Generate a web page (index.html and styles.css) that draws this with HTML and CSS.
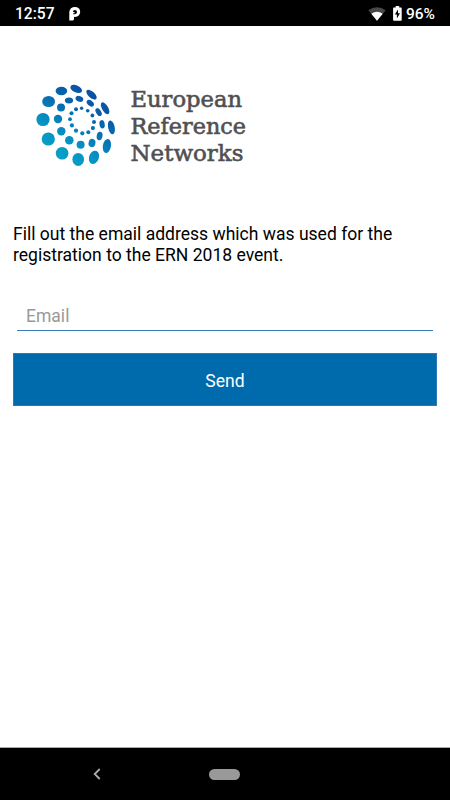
FILE: index.html
```html
<!DOCTYPE html>
<html lang="en">
<head>
<meta charset="utf-8">
<title>European Reference Networks</title>
<link rel="stylesheet" href="styles.css">
</head>
<body>
<header class="status">
  <span class="clock">12:57</span>
  <svg class="parking" width="12" height="14" viewBox="0 0 12 14"><path fill="#fff" fill-rule="evenodd" d="M2 1.2Q4-.1 6.5.1Q11.3.7 11.2 5.1Q10.8 9.6 6 9.9L5 9.8V12.3Q4.8 13.5 3.4 13.5H.3V5.2Q.4 2.5 2 1.2M4.2 7.3H6Q8.2 6.8 8 4.8Q7.6 3 5.8 3.1Q4 3.3 3.9 5.1H5.5V6.2H4.2Z"/></svg>
  <svg class="wifi" width="18" height="14" viewBox="0 0 18 14"><path fill="#484848" d="M.3 3.3Q9-3 17.7 3.3L9 13.8Z"/><path fill="#fff" d="M3.3 6.7Q9 2.8 14.7 6.7L9 13.8Z"/></svg>
  <svg class="battery" width="9" height="15" viewBox="0 0 9 15"><path fill="#fff" d="M2.7 0H6.2V1.4H8Q8.7 1.4 8.7 2.2V14Q8.7 14.8 8 14.8H.8Q.1 14.8.1 14V2.2Q.1 1.4.8 1.4H2.7Z"/><path fill="#000" d="M5 3.6 1.8 8.6H3.9V12.5L7 7.3H5Z"/></svg>
  <span class="percent">96%</span>
</header>
<main class="content">
  <svg class="logo" width="220" height="90" viewBox="33 80 220 90" role="img" aria-label="European Reference Networks">
    <defs><linearGradient id="tone" gradientUnits="userSpaceOnUse" x1="103" y1="94" x2="60" y2="158"><stop offset="0" stop-color="#0b4ba0"/><stop offset=".4" stop-color="#076bb0"/><stop offset=".75" stop-color="#0693c3"/><stop offset="1" stop-color="#05a0c8"/></linearGradient></defs>
    <g fill="url(#tone)">
      <ellipse cx="61.4" cy="91" rx="5.8" ry="4.2"/>
      <ellipse cx="48.6" cy="101.5" rx="6.4" ry="5.6"/>
      <circle cx="43" cy="119.5" r="6.6"/>
      <circle cx="48.3" cy="139" r="6.6"/>
      <circle cx="62.1" cy="153.2" r="6.3"/>
      <ellipse cx="78.2" cy="159.4" rx="5.8" ry="6.5"/>
      <ellipse cx="94" cy="157.3" rx="4.9" ry="6.8" transform="rotate(20 94 157.3)"/>
      <ellipse cx="106.9" cy="146" rx="4" ry="7.1" transform="rotate(10 106.9 146)"/>
      <ellipse cx="111.4" cy="127.3" rx="3.3" ry="7" transform="rotate(-12 111.4 127.3)"/>
      <ellipse cx="105.1" cy="108.3" rx="6.6" ry="3.1" transform="rotate(60 105.1 108.3)"/>
      <ellipse cx="91.5" cy="94.6" rx="6.4" ry="3.1" transform="rotate(42 91.5 94.6)"/>
      <ellipse cx="76.2" cy="88.9" rx="6.2" ry="3.5" transform="rotate(24 76.2 88.9)"/>
      <ellipse cx="69" cy="100.5" rx="4.1" ry="3"/>
      <circle cx="61" cy="107.5" r="4"/>
      <circle cx="58" cy="119" r="4.2"/>
      <circle cx="61.3" cy="131.3" r="4.2"/>
      <circle cx="69.3" cy="140.3" r="4.3"/>
      <circle cx="80.6" cy="144.7" r="4"/>
      <ellipse cx="92" cy="143" rx="3.4" ry="4.2" transform="rotate(15 92 143)"/>
      <ellipse cx="99.6" cy="136" rx="2.9" ry="4.2" transform="rotate(10 99.6 136)"/>
      <ellipse cx="102.1" cy="124.3" rx="2.6" ry="4.2" transform="rotate(-10 102.1 124.3)"/>
      <ellipse cx="98.6" cy="112.1" rx="4.3" ry="2.5" transform="rotate(58 98.6 112.1)"/>
      <ellipse cx="90.3" cy="103.2" rx="4.1" ry="2.7" transform="rotate(40 90.3 103.2)"/>
      <ellipse cx="79.4" cy="98.8" rx="4" ry="2.8" transform="rotate(20 79.4 98.8)"/>
      <circle cx="76" cy="109.3" r="2"/><circle cx="71.5" cy="113.2" r="2"/><circle cx="70" cy="119.2" r="1.9"/><circle cx="71.9" cy="125.4" r="2.1"/><circle cx="76" cy="130.7" r="2.1"/><circle cx="82.3" cy="133.3" r="2.1"/><circle cx="88.3" cy="132.3" r="2"/><circle cx="92.9" cy="128.1" r="2.1"/><circle cx="94" cy="122" r="2"/><circle cx="92.4" cy="115.5" r="1.9"/><circle cx="87.7" cy="110.7" r="1.8"/><circle cx="81.6" cy="108.3" r="1.7"/>
    </g>
    <g class="wordmark">
      <text x="130.5" y="107.3" textLength="111.5" lengthAdjust="spacingAndGlyphs">European</text>
      <text x="130.5" y="134.2" textLength="115.5" lengthAdjust="spacingAndGlyphs">Reference</text>
      <text x="130.5" y="161.2" textLength="113" lengthAdjust="spacingAndGlyphs">Networks</text>
    </g>
  </svg>
  <p class="intro">Fill out the email address which was used for the<br>registration to the ERN 2018 event.</p>
  <input class="email" type="email" placeholder="Email" aria-label="Email">
  <button class="send">Send</button>
</main>
<nav class="navbar">
  <svg class="back" width="8" height="12" viewBox="0 0 8 12"><path d="M6.7 1 1.7 6 6.7 11" fill="none" stroke="#aaa" stroke-width="1.8"/></svg>
  <span class="home"></span>
</nav>
</body>
</html>
```

FILE: styles.css
```css
* { box-sizing: border-box; }
body {
  margin: 0;
  height: 800px;
  display: flex;
  flex-direction: column;
  overflow: hidden;
  background: #fff;
  font-family: Roboto, sans-serif;
  color: #000;
}
.status {
  height: 26px;
  padding: 1px 15px 0;
  display: flex;
  align-items: center;
  background: #000;
  color: #fff;
  font-size: 15.6px;
  font-weight: 500;
}
.clock { width: 53.5px; }
.wifi { margin-left: auto; }
.battery { margin-left: 7px; }
.percent { margin-left: 4px; width: 29px; font-size: 15.5px; }
.content {
  flex: 1;
  padding: 54px 13px 0;
  display: flex;
  flex-direction: column;
}
.logo { margin-left: 20px; }
.wordmark {
  font-family: "DejaVu Serif", serif;
  font-size: 22.5px;
  fill: #505050;
  stroke: #505050;
  stroke-width: .6px;
}
.intro {
  margin: 54px 0 0;
  font-size: 17.55px;
  line-height: 21px;
  white-space: nowrap;
}
.email {
  height: 30px;
  margin: 35px 4px 0;
  padding: 0 9px;
  border: 0;
  border-bottom: 1px solid #3b7fbd;
  outline: 0;
  background: transparent;
  font: 17.55px Roboto, sans-serif;
}
.email::placeholder { color: #999; }
.send {
  height: 53px;
  margin-top: 22px;
  padding: 2px 0 0;
  border: 1px solid #2b79b6;
  background: #006bac;
  color: #fff;
  font: 17.55px Roboto, sans-serif;
}
.navbar {
  height: 53px;
  padding-left: 93px;
  display: flex;
  align-items: center;
  border-top: 1px solid #aaa;
  background: #000;
}
.home {
  width: 31px;
  height: 11px;
  margin-left: 108px;
  border-radius: 6px;
  background: #999;
}
```
